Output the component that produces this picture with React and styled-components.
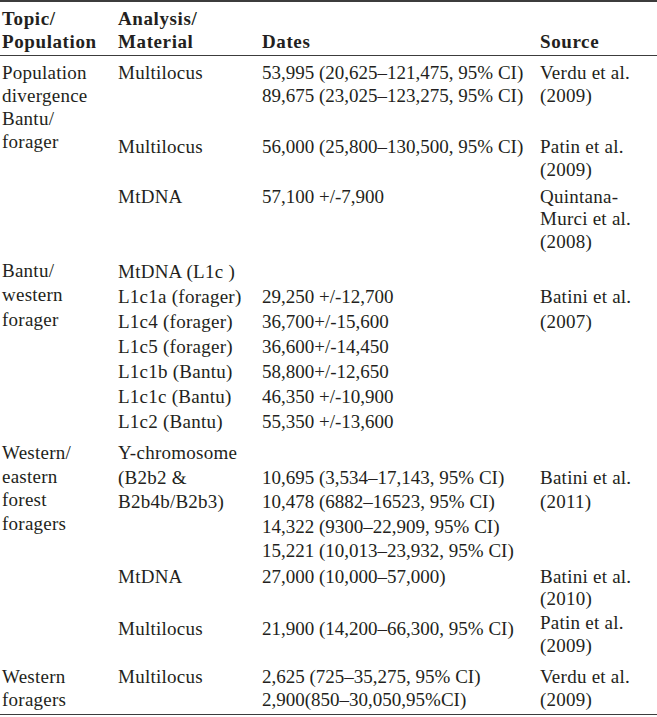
import React from "react";
import styled, { createGlobalStyle } from "styled-components";

const GlobalStyle = createGlobalStyle`
  html, body {
    margin: 0;
    padding: 0;
    background: #fff;
  }
  body {
    font-family: "Liberation Serif", "DejaVu Serif", serif;
    color: #231f20;
  }
`;

const Table = styled.div`
  width: 657px;
  border-top: 2px solid #3c3c3c;
  border-bottom: 1.5px solid #3c3c3c;
  font-size: 19px;
  letter-spacing: 0.25px;
  padding-bottom: 3.5px;
`;

const HeaderRow = styled.div`
  display: grid;
  grid-template-columns: 116px 144px 278px 1fr;
  padding: 5px 0 2px 2px;
  border-bottom: 1px solid #3c3c3c;
  line-height: 23px;
  font-weight: 700;
  letter-spacing: 0.6px;
`;

const HeadCell = styled.div`
  align-self: end;
  white-space: nowrap;
`;

const Section = styled.div`
  display: grid;
  grid-template-columns: 116px 1fr;
  padding-left: 2px;
  margin-top: ${(p) => p.$top}px;
`;

const Topic = styled.div`
  line-height: ${(p) => p.$lh}px;
  white-space: nowrap;
`;

const Entries = styled.div`
  display: flex;
  flex-direction: column;
`;

const Entry = styled.div`
  display: grid;
  grid-template-columns: 144px 278px 1fr;
  margin-top: ${(p) => p.$top || 0}px;
  line-height: ${(p) => p.$lh}px;
`;

const Cell = styled.div`
  white-space: nowrap;
  letter-spacing: ${(p) => (p.$numeric ? "0" : "inherit")};
  transform: translateY(${(p) => p.$shift || 0}px);
`;

const Line = styled.div`
  min-height: 1em;
`;

const sections = [
  {
    top: 4.5,
    topic: ["Population", "divergence", "Bantu/", "forager"],
    topicLh: 23,
    entries: [
      {
        lh: 23,
        analysis: ["Multilocus"],
        dates: [
          "53,995 (20,625–121,475, 95% CI)",
          "89,675 (23,025–123,275, 95% CI)",
        ],
        source: ["Verdu et al.", "(2009)"],
      },
      {
        top: 28,
        lh: 23,
        analysis: ["Multilocus"],
        dates: ["56,000 (25,800–130,500, 95% CI)"],
        source: ["Patin et al.", "(2009)"],
      },
      {
        top: 5,
        lh: 22.5,
        analysis: ["MtDNA"],
        dates: ["57,100 +/-7,900"],
        source: ["Quintana-", "Murci et al.", "(2008)"],
      },
    ],
  },
  {
    top: 5.5,
    topic: ["Bantu/", "western", "forager"],
    topicLh: 24.6,
    entries: [
      {
        lh: 25,
        analysis: [
          "MtDNA (L1c )",
          "L1c1a (forager)",
          "L1c4 (forager)",
          "L1c5 (forager)",
          "L1c1b (Bantu)",
          "L1c1c (Bantu)",
          "L1c2 (Bantu)",
        ],
        dates: [
          "",
          "29,250 +/-12,700",
          "36,700+/-15,600",
          "36,600+/-14,450",
          "58,800+/-12,650",
          "46,350 +/-10,900",
          "55,350 +/-13,600",
        ],
        source: ["", "Batini et al.", "(2007)"],
      },
    ],
  },
  {
    top: 7.5,
    topic: ["Western/", "eastern", "forest", "foragers"],
    topicLh: 23.5,
    entries: [
      {
        lh: 24.5,
        analysis: ["Y-chromosome", "(B2b2 &", "B2b4b/B2b3)"],
        dates: [
          "",
          "10,695 (3,534–17,143, 95% CI)",
          "10,478 (6882–16523, 95% CI)",
          "14,322 (9300–22,909, 95% CI)",
          "15,221 (10,013–23,932, 95% CI)",
        ],
        source: ["", "Batini et al.", "(2011)"],
      },
      {
        top: 2,
        lh: 22.5,
        analysis: ["MtDNA"],
        dates: ["27,000 (10,000–57,000)"],
        source: ["Batini et al.", "(2010)"],
      },
      {
        top: 6,
        lh: 23,
        analysis: ["Multilocus"],
        dates: ["21,900 (14,200–66,300, 95% CI)"],
        source: ["Patin et al.", "(2009)"],
        shift: -6,
      },
    ],
  },
  {
    top: 2,
    topic: ["Western", "foragers"],
    topicLh: 23,
    entries: [
      {
        lh: 23,
        analysis: ["Multilocus"],
        dates: ["2,625 (725–35,275, 95% CI)", "2,900(850–30,050,95%CI)"],
        source: ["Verdu et al.", "(2009)"],
      },
    ],
  },
];

const Lines = ({ items }) =>
  items.map((t, i) => <Line key={i}>{t || "\u00a0"}</Line>);

export default function App() {
  return (
    <>
      <GlobalStyle />
      <Table>
        <HeaderRow>
          <HeadCell>
            Topic/
            <br />
            Population
          </HeadCell>
          <HeadCell>
            Analysis/
            <br />
            Material
          </HeadCell>
          <HeadCell>Dates</HeadCell>
          <HeadCell>Source</HeadCell>
        </HeaderRow>
        {sections.map((s, si) => (
          <Section key={si} $top={s.top}>
            <Topic $lh={s.topicLh}>
              <Lines items={s.topic} />
            </Topic>
            <Entries>
              {s.entries.map((e, ei) => (
                <Entry key={ei} $top={e.top} $lh={e.lh}>
                  <Cell>
                    <Lines items={e.analysis} />
                  </Cell>
                  <Cell $numeric>
                    <Lines items={e.dates} />
                  </Cell>
                  <Cell $shift={e.shift}>
                    <Lines items={e.source} />
                  </Cell>
                </Entry>
              ))}
            </Entries>
          </Section>
        ))}
      </Table>
    </>
  );
}
